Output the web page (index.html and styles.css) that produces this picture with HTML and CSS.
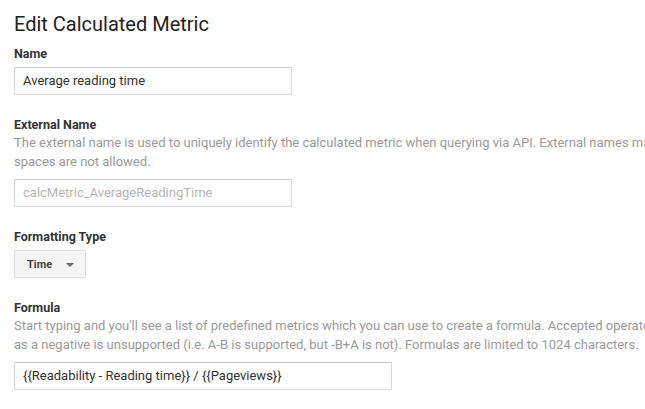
FILE: index.html
```html
<!DOCTYPE html>
<html>
<head>
<meta charset="utf-8">
<link rel="stylesheet" href="styles.css">
</head>
<body>
<div class="page">
  <h1 class="title">Edit Calculated Metric</h1>
  <div class="field">
    <div class="label">Name</div>
    <div class="input">Average reading time</div>
  </div>
  <div class="field">
    <div class="label tight">External Name</div>
    <div class="desc">The external name is used to uniquely identify the calculated metric when querying via API. External names may only contain alphanumeric characters and underscores;<br>spaces are not allowed.</div>
    <div class="input placeholder">calcMetric_AverageReadingTime</div>
  </div>
  <div class="field">
    <div class="label">Formatting Type</div>
    <div class="select">Time <span class="caret"></span></div>
  </div>
  <div class="field">
    <div class="label tight">Formula</div>
    <div class="desc">Start typing and you'll see a list of predefined metrics which you can use to create a formula. Accepted operators are +, -, *, /, and parentheses; using a minus sign<br>as a negative is unsupported (i.e. A-B is supported, but -B+A is not). Formulas are limited to 1024 characters.</div>
    <div class="input wide">{{Readability - Reading time}} / {{Pageviews}}</div>
  </div>
</div>
</body>
</html>
```
FILE: styles.css
```css
html, body { margin: 0; padding: 0; background: #fff; overflow: hidden; }
body { font-family: Roboto, "Liberation Sans", sans-serif; color: #222; }
.page { padding: 11px 14px 0 14px; width: 617px; }
.title { font-size: 20px; font-weight: 400; margin: 0 0 9px 0; line-height: 26px; color: #222; }
.field { display: flex; flex-direction: column; align-items: flex-start; margin-bottom: 22px; }
.label { font-size: 12.5px; font-weight: 700; color: #333; line-height: 16px; margin-bottom: 5px; }
.label.tight { margin-bottom: 0; }
.desc { font-size: 13px; color: #9a9a9a; line-height: 19px; white-space: nowrap; overflow: hidden; width: 631px; margin-bottom: 8px; }
.input { box-sizing: border-box; width: 278px; height: 28px; border: 1px solid #d9d9d9; border-top-color: #c9c9c9; padding: 0 8px; font-size: 13px; line-height: 26px; color: #333; }
.input.placeholder { color: #b5b5b5; }
.input.wide { width: 378px; }
.select { box-sizing: border-box; width: 72px; height: 28px; border: 1px solid #dcdcdc; border-radius: 2px; background: #f5f5f5; font-size: 11px; font-weight: 700; color: #444; padding-left: 12px; display: flex; align-items: center; gap: 14px; }
.caret { width: 0; height: 0; border-left: 4px solid transparent; border-right: 4px solid transparent; border-top: 4px solid #666; margin-top: 2px; }
```
